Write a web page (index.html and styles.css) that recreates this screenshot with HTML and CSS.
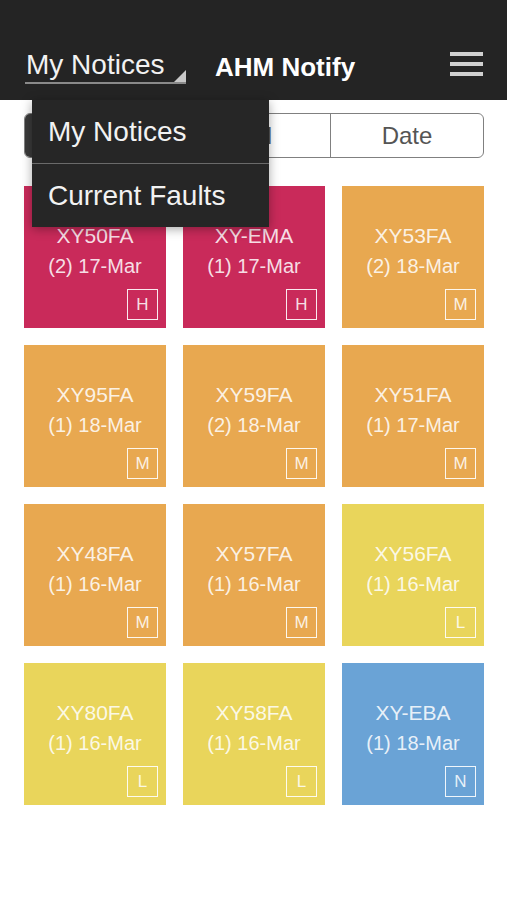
FILE: index.html
```html
<!DOCTYPE html>
<html lang="en">

<head>
    <meta charset="UTF-8">
    <meta name="viewport" content="width=device-width, initial-scale=1.0">
    <title>AHM Notify</title>
    <link rel="stylesheet" href="styles.css">
</head>

<body>
    <header class="top-bar">
        <div class="picker">
            <span class="picker-label">My Notices</span>
            <span class="picker-corner"></span>
        </div>
        <h1 class="app-title">AHM Notify</h1>
        <svg class="menu-icon" width="33" height="26" viewBox="0 0 33 26">
            <rect x="0" y="1" width="33" height="4" fill="#d0d0d0" />
            <rect x="0" y="11" width="33" height="4" fill="#d0d0d0" />
            <rect x="0" y="21" width="33" height="4" fill="#d0d0d0" />
        </svg>
    </header>

    <!-- dropdown for the picker, lies over the page -->
    <ul class="dropdown">
        <li>My Notices</li>
        <li>Current Faults</li>
    </ul>

    <div class="segments">
        <div class="segment active">Priority</div>
        <div class="segment">Tail</div>
        <div class="segment">Date</div>
    </div>

    <div class="tiles">
        <div class="tile high"><span class="code">XY50FA</span><span class="when">(2) 17-Mar</span><span class="badge">H</span></div>
        <div class="tile high"><span class="code">XY-EMA</span><span class="when">(1) 17-Mar</span><span class="badge">H</span></div>
        <div class="tile medium"><span class="code">XY53FA</span><span class="when">(2) 18-Mar</span><span class="badge">M</span></div>

        <div class="tile medium"><span class="code">XY95FA</span><span class="when">(1) 18-Mar</span><span class="badge">M</span></div>
        <div class="tile medium"><span class="code">XY59FA</span><span class="when">(2) 18-Mar</span><span class="badge">M</span></div>
        <div class="tile medium"><span class="code">XY51FA</span><span class="when">(1) 17-Mar</span><span class="badge">M</span></div>

        <div class="tile medium"><span class="code">XY48FA</span><span class="when">(1) 16-Mar</span><span class="badge">M</span></div>
        <div class="tile medium"><span class="code">XY57FA</span><span class="when">(1) 16-Mar</span><span class="badge">M</span></div>
        <div class="tile low"><span class="code">XY56FA</span><span class="when">(1) 16-Mar</span><span class="badge">L</span></div>

        <div class="tile low"><span class="code">XY80FA</span><span class="when">(1) 16-Mar</span><span class="badge">L</span></div>
        <div class="tile low"><span class="code">XY58FA</span><span class="when">(1) 16-Mar</span><span class="badge">L</span></div>
        <div class="tile none"><span class="code">XY-EBA</span><span class="when">(1) 18-Mar</span><span class="badge">N</span></div>
    </div>
</body>

</html>
```

FILE: styles.css
```css
body {
    font-family: "Liberation Sans", Arial, sans-serif;
    background-color: #fff;
    margin: 0;
    padding: 0;
}

.top-bar {
    height: 100px;
    box-sizing: border-box;
    background-color: #242424;
    display: flex;
    align-items: flex-end;
    padding: 0 24px 16px 25px;
}

.picker {
    position: relative;
    width: 161px;
    border-bottom: 2px solid #8a8a8a;
}

.picker-label {
    display: block;
    font-size: 28px;
    line-height: 34px;
    color: #f2f2f2;
    padding-left: 1px;
}

.picker-corner {
    position: absolute;
    right: 0;
    bottom: 0;
    width: 0;
    height: 0;
    border-left: 12px solid transparent;
    border-bottom: 12px solid #c8c8c8;
}

.app-title {
    margin: 0 0 0 29px;
    font-size: 26px;
    line-height: 34px;
    font-weight: bold;
    color: #fff;
    padding-bottom: 0;
    flex: 1;
}

.menu-icon {
    margin-bottom: 7px;
}

.dropdown {
    position: absolute;
    top: 100px;
    left: 32px;
    width: 237px;
    margin: 0;
    padding: 0;
    list-style: none;
    background-color: #262626;
    box-shadow: 0 2px 10px rgba(0, 0, 0, 0.35);
    z-index: 5;
}

.dropdown li {
    height: 63px;
    line-height: 63px;
    padding-left: 16px;
    font-size: 28px;
    color: #f2f2f2;
}

.dropdown li + li {
    border-top: 1px solid #6a6a6a;
}

.segments {
    display: flex;
    margin: 13px 23px 0 24px;
    height: 45px;
    box-sizing: border-box;
    border: 1.5px solid #808080;
    border-radius: 6px;
    overflow: hidden;
}

.segment {
    flex: 1;
    display: flex;
    align-items: center;
    justify-content: center;
    font-size: 24px;
    color: #555;
}

.segment + .segment {
    border-left: 1.5px solid #808080;
}

.segment.active {
    background-color: #3a3a3a;
    color: #fff;
}

.tiles {
    display: grid;
    grid-template-columns: repeat(3, 142px);
    grid-auto-rows: 142px;
    gap: 17px;
    margin: 28px 23px 0 24px;
}

.tile {
    position: relative;
    display: flex;
    flex-direction: column;
    align-items: center;
    padding-top: 35px;
    box-sizing: border-box;
    color: rgba(255, 255, 255, 0.86);
}

.tile .code {
    font-size: 21px;
    line-height: 30px;
}

.tile .when {
    font-size: 20px;
    line-height: 30px;
}

.tile .badge {
    position: absolute;
    right: 8px;
    bottom: 8px;
    width: 31px;
    height: 31px;
    box-sizing: border-box;
    border: 1.5px solid rgba(255, 255, 255, 0.9);
    display: flex;
    align-items: center;
    justify-content: center;
    font-size: 17px;
}

.high {
    background-color: #c92a5a;
}

.medium {
    background-color: #e8a850;
}

.low {
    background-color: #e9d55b;
}

.none {
    background-color: #6aa3d6;
}
```
